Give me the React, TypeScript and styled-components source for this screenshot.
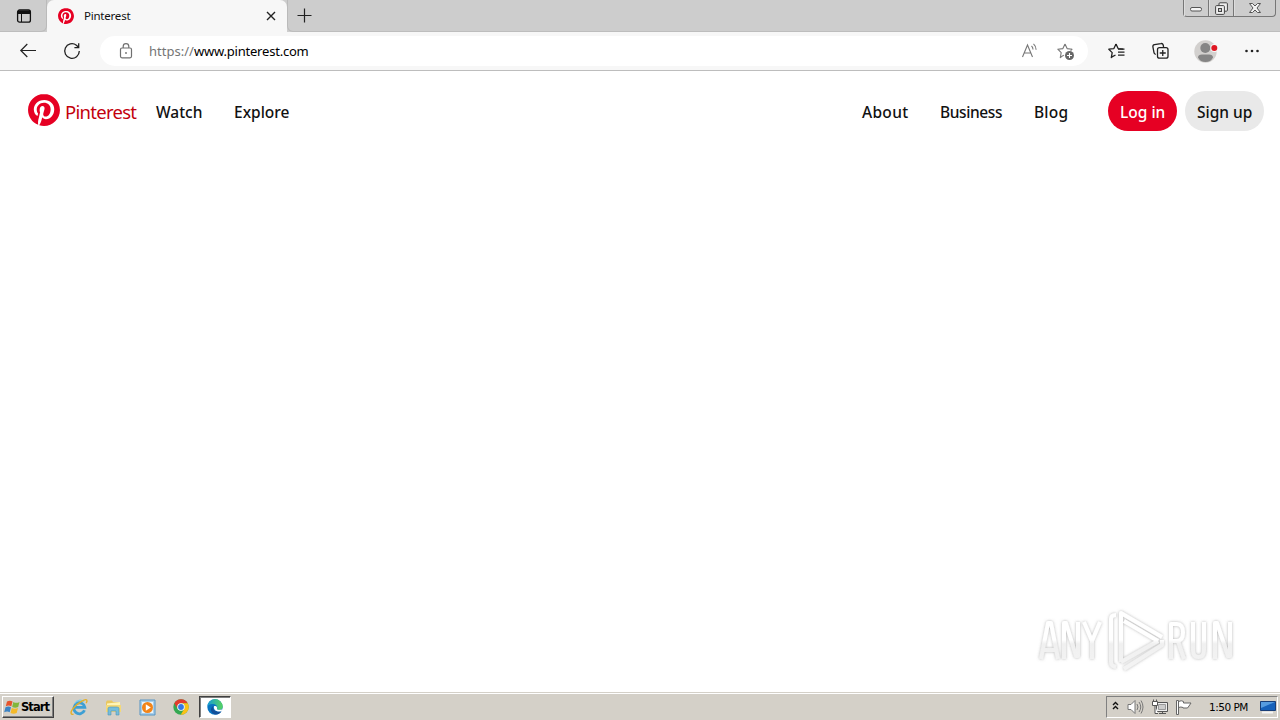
import * as React from "react";
import styled, { createGlobalStyle, css } from "styled-components";

const GlobalStyle = createGlobalStyle`
  * {
    box-sizing: border-box;
  }

  body {
    margin: 0;
    overflow: hidden;
    background: #fff;
    font-family: "Noto Sans", "Open Sans", sans-serif;
  }

  svg {
    display: block;
    flex: none;
    overflow: visible;
  }
`;

const Screen = styled.div`
  display: flex;
  flex-direction: column;
  width: 1280px;
  height: 720px;
`;

const TabStrip = styled.div`
  display: flex;
  height: 32px;
  background: #cdcdcd;
`;

const TabActions = styled.div`
  display: flex;
  align-items: center;
  width: 47px;
  padding-left: 16px;
  border-bottom: 1px solid #bdbdbd;
  border-right: 1px solid #bababa;
  border-bottom-right-radius: 6px;
`;

const Tab = styled.div`
  display: flex;
  align-items: center;
  width: 240px;
  padding: 0 11px;
  background: #f7f7f7;
  border-radius: 7px 7px 0 0;
`;

const TabTitle = styled.span`
  flex: 1;
  margin-left: 10px;
  font-size: 11.5px;
  line-height: 16px;
  letter-spacing: -0.22px;
  color: #111;
`;

const StripRest = styled.div`
  display: flex;
  flex: 1;
  justify-content: space-between;
  padding: 0 4px 0 9px;
  border-left: 1px solid #bababa;
  border-bottom: 1px solid #bdbdbd;
  border-bottom-left-radius: 6px;
`;

const NewTab = styled.div`
  padding-top: 8px;
`;

const WindowControls = styled.div`
  display: flex;
  height: 17px;
  border: 1px solid #777;
  border-top: 0;
  border-radius: 0 0 4px 4px;
`;

const WindowButton = styled.div<{ $width: number }>`
  display: flex;
  align-items: center;
  justify-content: center;
  width: ${props => props.$width}px;
  box-shadow: inset 1px 0 #ddd;

  & + & {
    border-left: 1px solid #777;
  }
`;

const Toolbar = styled.div`
  display: flex;
  align-items: center;
  height: 39px;
  padding: 0 18px 0 20px;
  background: #f7f7f7;
  border-bottom: 1px solid #bdbdbd;
`;

const NavButtons = styled.div`
  display: flex;
  gap: 28px;
  width: 80px;
`;

const AddressBar = styled.div`
  display: flex;
  align-items: center;
  width: 988px;
  height: 30px;
  padding: 0 14px 0 18px;
  border-radius: 15px;
  background: #fff;
`;

const Url = styled.span`
  flex: 1;
  margin-left: 15px;
  font-size: 13px;
  line-height: 18px;
  letter-spacing: -0.21px;
  color: #000;
`;

const Scheme = styled.span`
  letter-spacing: 0.02px;
  color: #757575;
`;

const AddressActions = styled.div`
  display: flex;
  gap: 19px;
`;

const ToolbarActions = styled.div`
  display: flex;
  flex: 1;
  align-items: center;
  justify-content: space-between;
  padding-left: 20px;
`;

const ActionPair = styled.div`
  display: flex;
  gap: 27px;
`;

const Page = styled.main`
  display: flex;
  flex: 1;
  flex-direction: column;
  justify-content: space-between;
`;

const SiteHeader = styled.header`
  display: flex;
  align-items: center;
  height: 80px;
  padding: 0 16px 0 28px;
`;

const Brand = styled.a`
  display: flex;
  align-items: center;
  width: 128px;
  margin-bottom: 2px;
`;

const BrandName = styled.span`
  margin: 3px 0 0 5px;
  font-size: 18.5px;
  line-height: 24px;
  letter-spacing: -0.72px;
  color: #c3000d;
`;

const navText = css`
  font-size: 15.5px;
  font-weight: 500;
  line-height: 24px;
  white-space: nowrap;
  color: #111;
`;

const NavLink = styled.a<{ $width: number; $spacing?: number }>`
  ${navText}
  width: ${props => props.$width}px;
  margin-top: 1px;
  letter-spacing: ${props => props.$spacing || 0}px;
`;

const SiteLinks = styled.nav`
  display: flex;
  gap: 32px;
`;

const AccountLinks = styled(SiteLinks)`
  margin-left: auto;
`;

const PillButton = styled.a<{ $width: number; $primary?: boolean }>`
  ${navText}
  width: ${props => props.$width}px;
  height: 40px;
  margin-left: ${props => (props.$primary ? 40 : 8)}px;
  padding: 9px 0 0 12px;
  border-radius: 20px;
  background: ${props => (props.$primary ? "#e60023" : "#e9e9e9")};
  color: ${props => (props.$primary ? "#fff" : "#111")};
`;

const Watermark = styled.div`
  align-self: flex-end;
  margin: 0 42px 20px 0;
`;

const Taskbar = styled.footer`
  display: flex;
  align-items: center;
  height: 28px;
  padding: 2px 2px 1px;
  border-top: 1px solid #d4d0c8;
  box-shadow: inset 0 1px #fff;
  background: #d4d0c8;
  font-family: "DejaVu Sans", sans-serif;
`;

const StartButton = styled.div`
  display: flex;
  align-items: center;
  gap: 1px;
  width: 52px;
  height: 22px;
  padding-left: 1px;
  border: 1px solid;
  border-color: #fff #404040 #404040 #fff;
  box-shadow: inset -1px -1px #808080;
  font-size: 11.5px;
  font-weight: bold;
  letter-spacing: -0.95px;
  color: #000;
`;

const QuickLaunch = styled.div`
  display: flex;
  align-items: center;
  gap: 17px;
  margin-left: 16px;
`;

const ActiveTask = styled.div`
  display: flex;
  align-items: center;
  justify-content: center;
  width: 32px;
  height: 22px;
  margin-left: 10px;
  border: 1px solid;
  border-color: #404040 #fff #fff #404040;
  box-shadow: inset 1px 1px #808080;
  background: #fff;
`;

const Tray = styled.div`
  display: flex;
  align-items: center;
  width: 172px;
  height: 22px;
  margin-left: auto;
  padding-left: 5px;
  border: 1px solid;
  border-color: #808080 #fff #fff #808080;
`;

const TrayIcons = styled.div`
  display: flex;
  align-items: center;
  gap: 8px;
`;

const Clock = styled.span`
  width: 42px;
  margin: 0 9px 0 17px;
  font-size: 10.5px;
  letter-spacing: -0.5px;
  white-space: nowrap;
  color: #000;
`;

const PinterestMark = ({ size }: { size: number }) => (
  <svg width={size} height={size} viewBox="0 0 24 24">
    <circle cx="12" cy="12" r="11.5" fill="#fff" />
    <path
      fill="#e60023"
      d="M12.017 0C5.396 0 .029 5.367.029 11.987c0 5.079 3.158 9.417 7.618 11.162-.105-.949-.199-2.403.041-3.439.219-.937 1.406-5.957 1.406-5.957s-.359-.72-.359-1.781c0-1.663.967-2.911 2.168-2.911 1.024 0 1.518.769 1.518 1.688 0 1.029-.653 2.567-.992 3.992-.285 1.193.6 2.165 1.775 2.165 2.128 0 3.768-2.245 3.768-5.487 0-2.861-2.063-4.869-5.008-4.869-3.41 0-5.409 2.562-5.409 5.199 0 1.033.394 2.143.889 2.741.099.12.112.225.085.345-.09.375-.293 1.199-.334 1.363-.053.225-.172.271-.401.165-1.495-.69-2.433-2.878-2.433-4.646 0-3.776 2.748-7.252 7.92-7.252 4.158 0 7.392 2.967 7.392 6.923 0 4.135-2.607 7.462-6.233 7.462-1.214 0-2.354-.629-2.758-1.379l-.749 2.848c-.269 1.045-1.004 2.352-1.498 3.146 1.123.345 2.306.535 3.55.535 6.607 0 11.985-5.365 11.985-11.987C23.97 5.39 18.592.026 11.985.026L12.017 0z"
    />
  </svg>
);

const TabMenuIcon = () => (
  <svg width="16" height="16" viewBox="0 0 16 16" fill="none" stroke="#111">
    <rect x="1.6" y="2" width="12.8" height="12.2" rx="2" strokeWidth="1.3" />
    <path d="M2 3h12v2.5H2z" fill="#111" />
    <path d="M5.5 5v9" />
  </svg>
);

const CloseIcon = () => (
  <svg width="10" height="10" viewBox="0 0 10 10" stroke="#222" strokeWidth="1.4">
    <path d="m1 1 8 8M9 1 1 9" />
  </svg>
);

const PlusIcon = () => (
  <svg width="15" height="15" viewBox="0 0 15 15" stroke="#222" strokeWidth="1.2">
    <path d="M7.5.5v14M.5 7.5h14" />
  </svg>
);

const MinimizeIcon = () => (
  <svg width="12" height="6" viewBox="0 0 12 6">
    <rect x=".5" y="2.5" width="11" height="3.5" rx="1.5" fill="#f5f5f5" stroke="#555" />
  </svg>
);

const RestoreIcon = () => (
  <svg width="13" height="13" viewBox="0 0 13 13" fill="#eee" stroke="#444">
    <rect x="4" y=".8" width="8.4" height="8.4" rx="1" />
    <rect x=".6" y="3.6" width="8.8" height="8.8" rx="1" />
    <rect x="3.5" y="6.5" width="3" height="3" fill="#ccc" />
  </svg>
);

const WindowCloseIcon = () => (
  <svg width="12" height="10" viewBox="0 0 12 10">
    <path d="M.5.5h3L6 3 8.5.5h3L8 5l3.5 4.5h-3L6 7 3.5 9.5h-3L4 5z" fill="#f3f3f3" stroke="#555" />
  </svg>
);

const BackIcon = () => (
  <svg width="16" height="16" viewBox="0 0 16 16" fill="none" stroke="#222" strokeWidth="1.2">
    <path d="M16 7.5H.8M7.3 1 .8 7.5 7.3 14" />
  </svg>
);

const ReloadIcon = () => (
  <svg width="16" height="16" viewBox="0 0 16 16" fill="none" stroke="#222" strokeWidth="1.3">
    <path d="M15.3 8A7.3 7.3 0 1 1 12.4 2.2L14.5 4.3M14.7.3v4.3h-4.3" />
  </svg>
);

const LockIcon = () => (
  <svg width="16" height="16" viewBox="0 0 16 16" fill="none" stroke="#707070" strokeWidth="1.2">
    <rect x="2.5" y="5" width="11" height="9.8" rx="1.5" />
    <path d="M5.2 5V3.500a2.800 2.800 0 0 1 5.600 0V5" />
    <circle cx="8" cy="10" r=".9" fill="#707070" stroke="none" />
  </svg>
);

const ReadAloudIcon = () => (
  <svg width="17" height="16" viewBox="0 0 17 16" fill="none" stroke="#777" strokeWidth="1.1">
    <path d="M1.5 14 6.500 2l5 12M3.200 10h6.600M10.500 3c1.100 1 1.500 2.100 1.500 3.500M12.500.8c1.800 1.600 2.600 3.500 2.600 5.900" />
  </svg>
);

const starPath = "M8 1 10.1 5.6 15.2 6.2M5 13.3 3.3 14.6 4.2 9.6.8 6.2 5.9 5.6 8 1";

const AddFavoriteIcon = () => (
  <svg width="17" height="17" viewBox="0 0 17 17" fill="none" stroke="#777" strokeWidth="1.1">
    <path d={starPath} strokeLinejoin="round" />
    <path d="m15.2 6.2-1.6 1.5M5 13.300l2-1.200" />
    <circle cx="12.5" cy="12.5" r="4.5" fill="#666" stroke="none" />
    <path d="M12.5 10v5M10 12.5h5" stroke="#fff" />
  </svg>
);

const FavoritesIcon = () => (
  <svg width="17" height="16" viewBox="0 0 17 16" fill="none" stroke="#222" strokeWidth="1.3">
    <path d={starPath} strokeLinejoin="round" />
    <path d="M5 13.3 7.5 12M10 6.100h6.500M10 9.100h6.500M10 12.100h6.500" />
  </svg>
);

const CollectionsIcon = () => (
  <svg width="17" height="16" viewBox="0 0 17 16" fill="none" stroke="#222" strokeWidth="1.3">
    <path d="M3.8 11.4 3 11a2 2 0 0 1-1-1.500L.9 4A2 2 0 0 1 2.500 1.700L8.800.6A2 2 0 0 1 11.200 2l.4 2" />
    <rect x="5.5" y="4.7" width="10.5" height="10.5" rx="2" fill="#f7f7f7" />
    <path d="M10.75 7v6M7.75 10h6" />
  </svg>
);

const Avatar = () => (
  <svg width="23" height="23" viewBox="0 0 23 23">
    <circle cx="11.5" cy="11.5" r="11.2" fill="#d2d0ce" />
    <circle cx="11.3" cy="8" r="5" fill="#858585" />
    <path d="M4 17.500c0-2 1.500-3 4-3h7c2.500 0 4 1 4 3-1.500 3-4 4.500-7.500 4.500S5.500 20.500 4 17.500Z" fill="#858585" />
    <circle cx="20.5" cy="8" r="4" fill="#f7f7f7" />
    <circle cx="20.3" cy="8" r="3" fill="#df1722" />
  </svg>
);

const MoreIcon = () => (
  <svg width="20" height="16" viewBox="0 0 20 16" fill="#222">
    <circle cx="4.5" cy="8" r="1.3" />
    <circle cx="10" cy="8" r="1.3" />
    <circle cx="15.5" cy="8" r="1.3" />
  </svg>
);

const AnyRunLogo = () => (
  <svg width="208" height="64" viewBox="0 0 208 64">
    <defs>
      <linearGradient id="glass" gradientUnits="userSpaceOnUse" x1="0" y1="0" x2="0" y2="64">
        <stop offset=".5" stopColor="#fff" />
        <stop offset=".56" stopColor="#f0f0f0" />
        <stop offset="1" stopColor="#f4f4f4" />
      </linearGradient>
      <filter id="soft" x="-10%" y="-10%" width="120%" height="120%">
        <feDropShadow dx="0" dy="0" stdDeviation="1.5" floodColor="#777" floodOpacity=".55" />
      </filter>
    </defs>
    <g filter="url(#soft)" fill="none" stroke="url(#glass)" strokeWidth="4" strokeLinejoin="round">
      <path d="M11 51 18 15h3l7 36M14 42h11M34 51V15h2l10 33h2V14M54 14l8 19 8-19M62 32v19" />
      <path d="M141 51V16h6q6 0 6 8.500t-6 8.500h-6M148 33l6 18M163 14v28q0 7 5.500 7t5.500-7V14M185 51V15h2l11 33h2V14" />
      <path d="M86 7q-5 0-5 4v43q0 4 5 5M91 54V5l41 24M94 13l34 20M91 54l37-21M94 61l38-24v-5" />
    </g>
  </svg>
);

const WindowsFlag = () => (
  <svg width="16" height="16" viewBox="0 0 16 16">
    <path d="M3 2.500q3-1.700 5.500 0L7.300 7.300q-2.700-1.700-5.500 0z" fill="#e6532b" />
    <path d="M9.300 3q3 1.700 6.200 0l-1.300 5q-3 1.500-6 0z" fill="#82b63a" />
    <path d="M1.500 8.200q3-1.600 5.500 0L5.700 13.300q-2.500-1.700-5.500 0z" fill="#3b83c4" />
    <path d="M7.800 9q3 1.500 6.200 0l-1.300 5q-3 1.500-6.200 0z" fill="#f4b928" />
  </svg>
);

const ExplorerIcon = () => (
  <svg width="18" height="18" viewBox="0 0 18 18" fill="none">
    <path d="M14.500 12.300A5.500 5.500 0 1 1 14.800 9.300H4.500" stroke="#3d9fd4" strokeWidth="2.800" />
    <path d="M14 4a5.500 5.500 0 0 0-9 1.200" stroke="#74cdf0" strokeWidth="1.2" />
    <path d="M3.500 16.200C.5 17-.2 14 4 9.500S15.500.2 16.800 2.200c.5.800 0 2-.7 3" stroke="#e5af27" strokeWidth="1.4" />
  </svg>
);

const FolderIcon = () => (
  <svg width="17" height="17" viewBox="0 0 17 17">
    <path d="M1 3 2 1.500h5L8 3h7v10H1z" fill="#e9c760" />
    <path d="M2 4.500 15 3v9H2z" fill="#fff4b5" />
    <path d="M1 6h15v7H1z" fill="#f4d978" />
    <path d="M3 16V9.500Q3 8 5 8h7q2 0 2 1.500V16h-3v-4H6v4z" fill="#75bddb" stroke="#4d96b6" strokeWidth=".6" />
  </svg>
);

const MediaIcon = () => (
  <svg width="17" height="17" viewBox="0 0 17 17">
    <path d="M1 1h15v15H1z" fill="#a8ceea" stroke="#5795c4" />
    <path d="M3 3h11v11H3z" fill="#eaf5fb" />
    <circle cx="8.5" cy="8.5" r="5.5" fill="#f28419" />
    <path d="m6.800 5.300 5 3.200-5 3.200z" fill="#fff" />
  </svg>
);

const ChromeIcon = () => (
  <svg width="16" height="16" viewBox="0 0 16 16">
    <circle cx="8" cy="8" r="7.7" fill="#33a852" />
    <path d="M1.300 4.200A7.700 7.700 0 0 1 14.700 4.200H8A3.800 3.800 0 0 0 4.700 9.900z" fill="#e33b2e" />
    <path d="M14.700 4.200A7.700 7.700 0 0 1 7.700 15.700l3.500-5.800A3.800 3.800 0 0 0 8 4.200z" fill="#fbc116" />
    <circle cx="8" cy="8" r="3.8" fill="#fff" />
    <circle cx="8" cy="8" r="2.9" fill="#3478e5" />
  </svg>
);

const EdgeIcon = () => (
  <svg width="16" height="16" viewBox="0 0 16 16">
    <defs>
      <linearGradient id="edge" x1="0" x2="1">
        <stop stopColor="#159cd8" />
        <stop offset="1" stopColor="#57d45d" />
      </linearGradient>
    </defs>
    <circle cx="8" cy="8" r="7.7" fill="#0874c2" />
    <path d="M.3 8A7.700 7.700 0 0 1 15.700 7.500c0 2-1.500 3.400-3.500 3.400-1.700 0-2.500-.6-2.200-1.200C11 7 8.500 5 5.500 5 2.500 5 .5 6.500.3 8Z" fill="url(#edge)" />
    <path d="M6.300 7C5 11 9 13.700 14.400 12.200 12.500 15.700 8.500 16.300 6 14.500S3 9 6.300 7Z" fill="#124f99" />
    <path d="M7 7.300c2-1.300 3.700.7 3 2.300-.4.900 1 1.600 3.500 1.200l2.500-.5-1.600 1.900C10 13.500 6 11 7 7.300Z" fill="#fff" />
  </svg>
);

const ChevronsIcon = () => (
  <svg width="7" height="10" viewBox="0 0 7 10" fill="none" stroke="#111" strokeWidth="1.4">
    <path d="m1 3 2.500-2.500L6 3M1 7l2.500-2.500L6 7" />
  </svg>
);

const SpeakerIcon = () => (
  <svg width="17" height="16" viewBox="0 0 17 16" fill="none" stroke="#777">
    <path d="M1 5.500h3L8 1.500v13l-4-4H1z" fill="#fff" />
    <path d="M10 5q2 3 0 6M12 3q3.500 5 0 10M14 1.500q4 6.500 0 13" />
  </svg>
);

const NetworkIcon = () => (
  <svg width="16" height="16" viewBox="0 0 16 16" fill="#eee" stroke="#555">
    <path d="M4.500 3.500h11v9h-11zM7 14.500h7M10.500 12.500v2" />
    <path d="M6.500 5.500h7v5h-7z" fill="#ccc" stroke="#999" />
    <path d="M.5 2.500h5v4h-5zM1.500.500v2M4.500.500v2M3 6.500v8h3" fill="#fff" />
  </svg>
);

const FlagIcon = () => (
  <svg width="16" height="16" viewBox="0 0 16 16" fill="#fff" stroke="#666">
    <path d="M.5 1.500h2v14h-2zM2.500 2.500q3-1.500 5 0v1.500h7.500l-2 3-1.500 2H7V8.500q-2-1-4.500 0z" />
  </svg>
);

const DesktopIcon = () => (
  <svg width="16" height="14" viewBox="0 0 16 14">
    <path d="M.5 1.500h15v9H.5z" fill="#1761ba" stroke="#193e78" />
    <path d="M1 2h14L1 8z" fill="#579ce0" />
    <path d="M2 12.500h11" stroke="#f4f4f4" strokeWidth="2" />
  </svg>
);

export default () => {
  return (
    <Screen>
      <GlobalStyle />
      <TabStrip>
        <TabActions>
          <TabMenuIcon />
        </TabActions>
        <Tab>
          <PinterestMark size={16} />
          <TabTitle>Pinterest</TabTitle>
          <CloseIcon />
        </Tab>
        <StripRest>
          <NewTab>
            <PlusIcon />
          </NewTab>
          <WindowControls>
            <WindowButton $width={24}>
              <MinimizeIcon />
            </WindowButton>
            <WindowButton $width={25}>
              <RestoreIcon />
            </WindowButton>
            <WindowButton $width={42}>
              <WindowCloseIcon />
            </WindowButton>
          </WindowControls>
        </StripRest>
      </TabStrip>

      <Toolbar>
        <NavButtons>
          <BackIcon />
          <ReloadIcon />
        </NavButtons>
        <AddressBar>
          <LockIcon />
          <Url>
            <Scheme>https://</Scheme>www.pinterest.com
          </Url>
          <AddressActions>
            <ReadAloudIcon />
            <AddFavoriteIcon />
          </AddressActions>
        </AddressBar>
        <ToolbarActions>
          <ActionPair>
            <FavoritesIcon />
            <CollectionsIcon />
          </ActionPair>
          <Avatar />
          <MoreIcon />
        </ToolbarActions>
      </Toolbar>

      <Page>
        <SiteHeader>
          <Brand>
            <PinterestMark size={32} />
            <BrandName>Pinterest</BrandName>
          </Brand>
          <SiteLinks>
            <NavLink $width={46}>Watch</NavLink>
            <NavLink $width={56}>Explore</NavLink>
          </SiteLinks>
          <AccountLinks>
            <NavLink $width={46} $spacing={0.3}>
              About
            </NavLink>
            <NavLink $width={62} $spacing={-0.4}>
              Business
            </NavLink>
            <NavLink $width={34} $spacing={0.2}>
              Blog
            </NavLink>
          </AccountLinks>
          <PillButton $width={69} $primary>
            Log in
          </PillButton>
          <PillButton $width={79}>Sign up</PillButton>
        </SiteHeader>
        <Watermark>
          <AnyRunLogo />
        </Watermark>
      </Page>

      <Taskbar>
        <StartButton>
          <WindowsFlag />
          Start
        </StartButton>
        <QuickLaunch>
          <ExplorerIcon />
          <FolderIcon />
          <MediaIcon />
          <ChromeIcon />
        </QuickLaunch>
        <ActiveTask>
          <EdgeIcon />
        </ActiveTask>
        <Tray>
          <TrayIcons>
            <ChevronsIcon />
            <SpeakerIcon />
            <NetworkIcon />
            <FlagIcon />
          </TrayIcons>
          <Clock>1:50 PM</Clock>
          <DesktopIcon />
        </Tray>
      </Taskbar>
    </Screen>
  );
};
